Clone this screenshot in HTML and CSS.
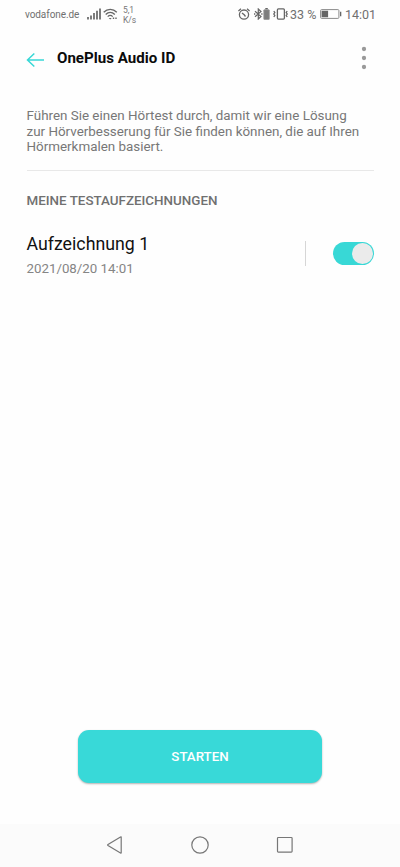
FILE: index.html
```html
<!DOCTYPE html>
<html lang="de">
<head>
<meta charset="utf-8">
<meta name="viewport" content="width=device-width, initial-scale=1">
<title>OnePlus Audio ID</title>
<link rel="stylesheet" href="styles.css">
</head>
<body>
<div class="screen">
  <div class="status">
    <span class="carrier">vodafone.de</span>
    <svg class="signal" width="14" height="12" viewBox="0 0 14 12"><path d="M1 9v2.500M4 7.500v4M7 5v6.500M10 2.800v8.700M13 .5v11" fill="none" stroke="currentColor" stroke-width="1.700"/></svg>
    <svg class="wifi" width="15" height="12" viewBox="0 0 15 12"><g fill="none" stroke="currentColor" stroke-width="1.300"><path d="M.7 4.200C4.500.3 10 .3 13.800 4.200M2.700 6.500c2.700-2.700 6.400-2.700 9.100 0M4.700 8.600c1.600-1.500 3.500-1.500 5 0"/></g><path d="M5.700 9.900h3l-1.500 1.700zM9.800 9.600h1.400v1.400H9.800zM12.300 9.600h1.400v1.400h-1.400z" fill="currentColor"/></svg>
    <span class="speed"><span>5,1</span><span>K/s</span></span>
    <span class="spacer"></span>
    <svg class="alarm" width="12" height="12" viewBox="0 0 12 12"><g fill="none" stroke="currentColor" stroke-width="1.300"><circle cx="6" cy="6.600" r="4.600"/><path d="M.4 2.900L3 .7M9 .7l2.600 2.200M4 5l2.200 1.800L7.500 8.500"/></g></svg>
    <svg class="bluetooth" width="16" height="12" viewBox="0 0 16 12"><path d="M1 3.300l6 5.200-2.700 2.500V1L7 3.500 1 8.700" fill="none" stroke="currentColor" stroke-width="1.200"/><path d="M0 5.300h1.300v1.400H0zM7.200 5.300h1.300v1.400H7.200zM11.300 0h2.500v1.500h-2.500z" fill="currentColor"/><rect x="9.800" y="1.700" width="5.500" height="9.800" rx=".6" fill="currentColor" fill-opacity=".85" stroke="#999" stroke-width=".8"/></svg>
    <svg class="vibrate" width="16" height="12" viewBox="0 0 16 12"><g fill="none" stroke="currentColor" stroke-width="1.300"><rect x="4.400" y=".9" width="7" height="10.200" rx="1"/><path d="M.8 3l1 1.500-1 1.500 1 1.500-1 1.500M14.200 3l-1 1.500 1 1.500-1 1.500 1 1.500"/></g></svg>
    <span class="percent">33 %</span>
    <svg class="battery" width="22" height="10" viewBox="0 0 22 10"><rect x=".6" y=".6" width="18.300" height="8.800" rx="1" fill="none" stroke="#8b8b8b" stroke-width="1"/><path d="M1.600 1.700h6.500v6.600H1.600zM20 2.800h1.300v4.400H20z" fill="currentColor"/></svg>
    <span class="clock">14:01</span>
  </div>
  <header class="header">
    <svg class="back" width="19" height="16" viewBox="0 0 19 16"><path d="M18 8H1.500M8.300 1.500L1.500 8l6.800 6.500" fill="none" stroke="currentColor" stroke-width="1.500"/></svg>
    <h1 class="title">OnePlus Audio ID</h1>
    <svg class="more" width="6" height="24" viewBox="0 0 6 24"><g fill="currentColor"><circle cx="3" cy="3" r="2.150"/><circle cx="3" cy="12" r="2.150"/><circle cx="3" cy="21" r="2.150"/></g></svg>
  </header>
  <main class="main">
    <p class="intro">Führen Sie einen Hörtest durch, damit wir eine Lösung<br>zur Hörverbesserung für Sie finden können, die auf Ihren<br>Hörmerkmalen basiert.</p>
    <h2 class="section">MEINE TESTAUFZEICHNUNGEN</h2>
    <div class="record">
      <div class="info">
        <div class="name">Aufzeichnung 1</div>
        <div class="date">2021/08/20 14:01</div>
      </div>
      <span class="divider"></span>
      <span class="toggle"><span class="knob"></span></span>
    </div>
    <button class="start">STARTEN</button>
  </main>
  <nav class="nav">
    <svg width="18" height="20" viewBox="0 0 18 20"><path d="M15.200 2.200v15.600q0 .7-.7.300L2 10.600q-.8-.6 0-1.200L14.500 1.900q.7-.4.700.3z" fill="none" stroke="currentColor" stroke-width="1.200"/></svg>
    <svg width="18" height="20" viewBox="0 0 18 20"><circle cx="9" cy="10" r="8.200" fill="none" stroke="currentColor" stroke-width="1.200"/></svg>
    <svg width="18" height="20" viewBox="0 0 18 20"><rect x="1.500" y="2.500" width="14.600" height="14.600" rx=".8" fill="none" stroke="currentColor" stroke-width="1.200"/></svg>
  </nav>
</div>
</body>
</html>
```
FILE: styles.css
```css
* { box-sizing: border-box; }
body { margin: 0; background: #fff; font-family: Roboto, sans-serif; }
svg { display: block; flex: none; }
.screen { width: 400px; height: 867px; display: flex; flex-direction: column; background: #fefefe; overflow: hidden; }
.status { height: 28px; padding: 0 24px 0 25px; display: flex; align-items: center; color: #666; white-space: nowrap; }
.carrier { width: 62px; font-size: 10px; letter-spacing: -.08px; color: #707070; }
.signal { margin-right: 2px; }
.wifi { margin-right: 5px; }
.speed { display: flex; flex-direction: column; padding-top: 1px; font-size: 8.500px; line-height: 10px; letter-spacing: -.1px; color: #777; }
.spacer { flex: 1; }
.alarm { margin-right: 4px; }
.bluetooth { margin-right: 3px; }
.vibrate { margin-right: 1px; }
.percent { width: 30px; font-size: 12.500px; color: #707070; }
.battery { margin-right: 3px; }
.clock { width: 31px; font-size: 12.500px; color: #707070; }
.header { height: 60px; padding: 0 33px 0 26px; display: flex; align-items: center; }
.back { color: #38d8d6; margin: 4px 12px 0 0; }
.title { flex: 1; margin: 0; font-size: 15.100px; line-height: 20px; font-weight: 700; color: #0b0b0b; }
.more { color: #999; }
.main { flex: 1; padding: 20px 26px 0 26.500px; display: flex; flex-direction: column; }
.intro { margin: 0; height: 63px; border-bottom: 1px solid #e8e8e8; font-size: 13.400px; line-height: 15.600px; color: #777; white-space: nowrap; }
.section { margin: 22px 0 0; font-size: 13.400px; line-height: 16px; font-weight: 500; color: #707070; }
.record { height: 50px; margin-top: 21px; display: flex; align-items: center; }
.info { flex: 1; }
.name { font-size: 17.750px; line-height: 24px; color: #111; }
.date { margin-top: 4px; font-size: 13.300px; line-height: 18px; color: #858585; }
.divider { width: 1px; height: 25px; margin: 0 27px 3px 0; background: #d6d6d6; }
.toggle { width: 41px; height: 23px; margin-bottom: 3px; padding: 1px; border-radius: 12px; display: flex; justify-content: flex-end; background: #38d8d6; }
.knob { width: 21px; height: 21px; border-radius: 50%; background: #ebebeb; }
.start { width: 244px; height: 53px; margin: auto 0 41px 51.500px; padding: 0; border: 0; border-radius: 11px; background: #38d9d8; color: #fff; font: 500 13.300px/16px Roboto, sans-serif; box-shadow: 0 1px 2px rgba(0,0,0,.3); }
.nav { height: 43px; padding: 0 106px 1px; display: flex; justify-content: space-between; align-items: center; background: #fbfbfb; color: #777; }
```
